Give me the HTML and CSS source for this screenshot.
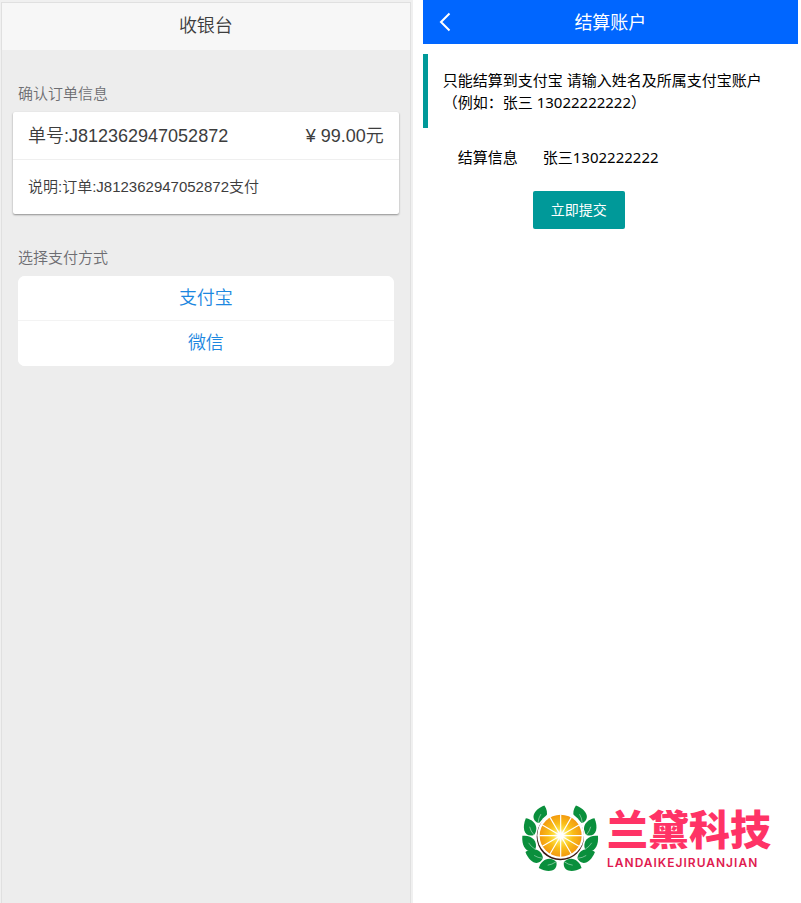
FILE: index.html
```html
<!DOCTYPE html>
<html lang="zh-CN">
<head>
<meta charset="utf-8">
<meta name="viewport" content="width=device-width, initial-scale=1">
<title>收银台</title>
<link rel="stylesheet" href="styles.css">
</head>
<body>
<div class="screens">
  <section class="cashier">
    <div class="cashier-page">
      <header class="cashier-bar"><h1>收银台</h1></header>
      <h2 class="section-title">确认订单信息</h2>
      <div class="card">
        <div class="card-head"><span>单号:J812362947052872</span><span>¥ 99.00元</span></div>
        <p class="card-body">说明:订单:J812362947052872支付</p>
      </div>
      <h2 class="section-title">选择支付方式</h2>
      <div class="pay-list">
        <button type="button">支付宝</button>
        <button type="button">微信</button>
      </div>
    </div>
  </section>
  <section class="account">
    <header class="account-bar">
      <a class="back" href="#" aria-label="返回"><svg viewBox="0 0 12 20" width="12" height="20"><path d="M10.500 1.500L2 10L10.500 18.500" fill="none" stroke="#fff" stroke-width="2"/></svg></a>
      <h1>结算账户</h1>
    </header>
    <blockquote class="notice">只能结算到支付宝 请输入姓名及所属支付宝账户（例如：张三 13022222222）</blockquote>
    <form class="settle">
      <div class="field">
        <label for="info">结算信息</label>
        <input id="info" type="text" value="张三1302222222">
      </div>
      <button class="submit" type="button">立即提交</button>
    </form>
    <footer class="brand">
      <svg class="brand-mark" viewBox="30 24 240 210" width="80" height="70" aria-hidden="true">
        <defs>
          <g id="leaf"><path d="M0 0C-28 -6 -24 -35 4 -56C24 -40 26 -11 0 0Z" fill="#0a8f3c"/><path d="M0 0Q-3 -16 1 -28" fill="none" stroke="#fff" stroke-width="1.200"/></g>
          <g id="branch">
            <use href="#leaf" transform="translate(84 84) rotate(16)"/>
            <use href="#leaf" transform="translate(72 120) rotate(-30)"/>
            <use href="#leaf" transform="translate(76 163) rotate(-48)"/>
            <use href="#leaf" transform="translate(99 190) rotate(-74)"/>
            <use href="#leaf" transform="translate(139 200) rotate(-114)"/>
          </g>
          <radialGradient id="juice" gradientUnits="userSpaceOnUse" cx="152" cy="122" r="63">
            <stop offset="0" stop-color="#fff"/><stop offset=".12" stop-color="#fff"/><stop offset=".32" stop-color="#fde047"/><stop offset=".6" stop-color="#f9bd18"/><stop offset="1" stop-color="#f39a10"/>
          </radialGradient>
        </defs>
        <use href="#branch"/>
        <use href="#branch" transform="translate(301 0) scale(-1 1)"/>
        <circle cx="151" cy="121" r="73" fill="#fff"/>
        <circle cx="151" cy="125" r="71" fill="#3b1a12"/>
        <circle cx="152" cy="121" r="70" fill="#fff"/>
        <circle cx="152" cy="122" r="63" fill="url(#juice)"/>
        <path d="M152 58V186M120 67L184 177M97 90L207 154M88 122H216M97 154L207 90M120 177L184 67" stroke="#fff" stroke-width="3.500"/>
      </svg>
      <div class="brand-text"><strong>兰黛科技</strong><span>LANDAIKEJIRUANJIAN</span></div>
    </footer>
  </section>
</div>
</body>
</html>
```
FILE: styles.css
```css
* { box-sizing: border-box; }
body {
  margin: 0;
  background: #fff;
  font-size: 15px;
  line-height: 22px;
}
h1, h2, p, blockquote { margin: 0; font-weight: inherit; }
button, input { font: inherit; border: 0; margin: 0; padding: 0; }

.screens {
  display: grid;
  grid-template-columns: 11fr 10fr;
  column-gap: 10px;
  min-height: 100vh;
  padding-right: 3px;
}

/* Cashier */
.cashier {
  padding: 2px 2px 0 1px;
  background: #f0f0f0;
  color: #3d3d3d;
  font-family: "Liberation Sans", "Noto Sans CJK SC", sans-serif;
  font-weight: 350;
}
.cashier-page {
  height: 100%;
  border: 1px solid #e0e0e0;
  border-bottom: 0;
  background: #ededed;
}
.cashier-bar {
  height: 47px;
  margin-bottom: 33px;
  background: #f7f7f7;
  text-align: center;
}
.cashier-bar h1 { font-size: 18px; line-height: 46px; }
.section-title {
  padding-left: 16px;
  font-size: 15px;
  line-height: 22px;
  color: #6d6d72;
}
.card {
  margin: 7px 11px 33px;
  border-radius: 2px;
  background: #fff;
  box-shadow: 0 1px 2px rgba(0, 0, 0, .4);
}
.card-head {
  display: flex;
  justify-content: space-between;
  padding: 1px 15px 0;
  border-bottom: 1px solid #efefef;
  font-size: 18px;
  line-height: 46px;
}
.card-body { padding: 16px 15px; }
.pay-list {
  margin: 7px 16px;
  border-radius: 7px;
  background: #fff;
  overflow: hidden;
}
.pay-list button {
  display: block;
  width: 100%;
  height: 45px;
  padding-bottom: 1px;
  background: #fff;
  color: #1c87e0;
  font-size: 18px;
}
.pay-list button:first-child { border-bottom: 1px solid #f3f3f3; }

/* Settlement account */
.account {
  display: flex;
  flex-direction: column;
  color: #000;
  font-family: "Noto Sans", "Noto Sans CJK SC", sans-serif;
}
.account-bar {
  display: grid;
  grid-template-columns: 44px 1fr 44px;
  align-items: center;
  height: 44px;
  background: #0066ff;
  color: #fff;
  text-align: center;
}
.account-bar h1 { font-size: 18px; line-height: 44px; }
.back { display: flex; justify-content: center; }
.notice {
  margin-top: 10px;
  padding: 15px;
  border-left: 5px solid #009999;
}
.settle { padding: 18px 15px 0 35px; }
.field { display: flex; gap: 25px; }
.field input { flex: 1; min-width: 0; background: none; color: inherit; }
.submit {
  display: block;
  height: 38px;
  margin: 23px 0 0 75px;
  padding: 0 18px;
  border-radius: 2px;
  background: #009999;
  color: #fff;
  font-size: 14px;
}
.brand {
  display: flex;
  gap: 7px;
  margin-top: auto;
  padding: 0 27px 30px 0;
  justify-content: flex-end;
}
.brand-text {
  display: flex;
  flex-direction: column;
  gap: 4px;
}
.brand-text strong {
  color: #ff3366;
  font-family: "Noto Sans CJK SC", sans-serif;
  font-size: 41px;
  font-weight: 900;
  line-height: 48px;
}
.brand-text span {
  color: #e01a4f;
  font-family: Inter, sans-serif;
  font-size: 12px;
  font-weight: 600;
  line-height: 16px;
  letter-spacing: 1px;
}
```
